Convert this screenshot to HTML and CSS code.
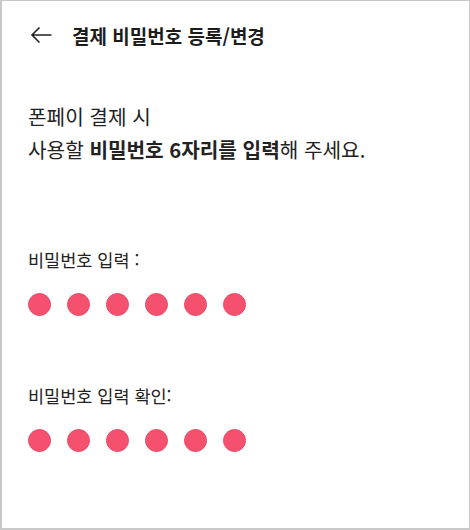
FILE: index.html
```html
<!DOCTYPE html>
<html lang="ko">
  <head>
    <meta charset="UTF-8" />
    <title>결제 비밀번호 등록/변경</title>
    <link rel="stylesheet" href="styles.css">
  </head>
  <body>
    <div class="screen">
      <header class="topbar">
        <svg class="back" width="22" height="18" viewBox="0 0 22 18">
          <path d="M21.5 9H2M9.5 1.5L2 9l7.5 7.5" fill="none" stroke="#222" stroke-width="1.6" />
        </svg>
        <h1 class="title">결제 비밀번호 등록/변경</h1>
      </header>

      <p class="guide">
        폰페이 결제 시<br>
        사용할 <b>비밀번호 6자리를 입력</b>해 주세요.
      </p>

      <div class="field">
        <div class="label">비밀번호 입력 :</div>
        <div class="dots">
          <span class="dot"></span><span class="dot"></span><span class="dot"></span>
          <span class="dot"></span><span class="dot"></span><span class="dot"></span>
        </div>
      </div>

      <div class="field">
        <div class="label">비밀번호 입력 확인:</div>
        <div class="dots">
          <span class="dot"></span><span class="dot"></span><span class="dot"></span>
          <span class="dot"></span><span class="dot"></span><span class="dot"></span>
        </div>
      </div>
    </div>
  </body>
</html>
```

FILE: styles.css
```css
* {
  margin: 0;
  padding: 0;
  box-sizing: border-box;
}

body {
  width: 470px;
  height: 530px;
  overflow: hidden;
  background: #ffffff;
  font-family: "Noto Sans CJK KR", "Noto Sans", sans-serif;
  color: #222222;
}

.screen {
  width: 470px;
  height: 530px;
  border: 1px solid #c8c8c8;
  border-left-width: 2px;
  border-bottom-width: 2px;
  padding: 0 26px;
}

.topbar {
  display: flex;
  align-items: center;
  height: 68px;
}

.back {
  margin-left: 2px;
  margin-right: 20px;
}

.title {
  font-size: 19px;
  font-weight: bold;
  color: #1c1c1c;
}

.guide {
  margin-top: 31px;
  font-size: 20.2px;
  line-height: 33px;
}

.guide b {
  font-weight: bold;
}

.field {
  margin-top: 82px;
}

.field + .field {
  margin-top: 68px;
}

.label {
  font-size: 17.5px;
  line-height: 24px;
}

.dots {
  display: flex;
  gap: 16px;
  margin-top: 21px;
}

.dot {
  width: 23px;
  height: 23px;
  border-radius: 50%;
  background: #f5516f;
  border: 1px solid #e84b69;
}
```
